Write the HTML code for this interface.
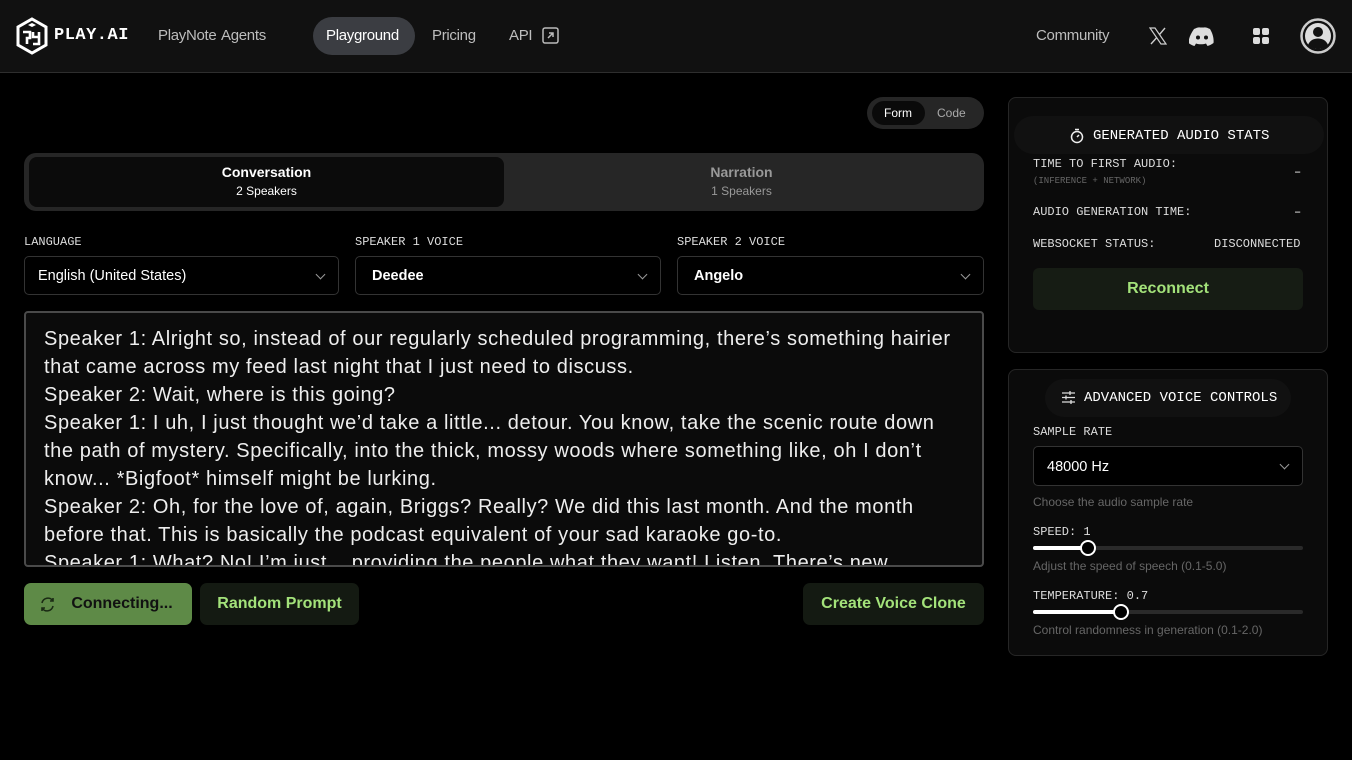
<!DOCTYPE html>
<html><head><meta charset="utf-8"><style>
*{box-sizing:border-box;margin:0;padding:0}
body{width:1352px;height:760px;background:#000;color:#fff;font-family:"Liberation Sans",sans-serif;overflow:hidden;position:relative}
.mono{font-family:"Liberation Mono",monospace}
.hdr{position:absolute;left:0;top:0;width:1352px;height:73px;background:#111;border-bottom:1px solid #2e2e2e}
.a{position:absolute}
.nav{font-size:15px;letter-spacing:-0.3px;color:#bdbdbd;top:27px}
.panel{position:absolute;left:1008px;width:320px;background:#0b0b0b;border:1px solid #262626;border-radius:8px}
.sel{position:absolute;height:39px;top:256px;border:1px solid #333;border-radius:5px;background:#000;font-size:14.5px;padding:11px 0 0 13px}
.chev{position:absolute;right:14px;top:14px;width:7px;height:7px;border-right:1.3px solid #999;border-bottom:1.3px solid #999;transform:rotate(45deg)}
.lbl{position:absolute;top:235px;font-size:12px;color:#ddd}
.btn{position:absolute;top:583px;height:42px;border-radius:7px;font-size:16px;font-weight:bold;color:#a3e27a;background:#141a12;padding-top:12px;text-align:center}
.st{position:absolute;left:24px;font-size:12px;color:#ddd}
</style></head><body>
<div class="hdr">
<svg class="a" style="left:15px;top:17px" width="34" height="38" viewBox="0 0 34 38"><path d="M17 2 L31 10 L31 28 L17 36 L3 28 L3 10 Z" fill="none" stroke="#fff" stroke-width="3"/><path d="M13 8l4-2 4 2-4 2z" fill="#fff"/><path d="M8 15h7v6h-3v6M18 15v5h6v-5M24 20v7h-6" fill="none" stroke="#fff" stroke-width="2.6"/></svg>
<div class="a mono" style="left:54px;top:26px;font-size:17px;font-weight:bold;letter-spacing:0.5px">PLAY.AI</div>
<div class="a nav" style="left:158px">PlayNote</div>
<div class="a nav" style="left:221px">Agents</div>
<div class="a" style="left:313px;top:17px;width:102px;height:38px;border-radius:19px;background:#3b3d42"></div>
<div class="a nav" style="left:326px;color:#fff">Playground</div>
<div class="a nav" style="left:432px">Pricing</div>
<div class="a nav" style="left:509px">API</div>
<svg class="a" style="left:542px;top:27px" width="17" height="17" viewBox="0 0 17 17"><rect x="1" y="1" width="15" height="15" rx="2" fill="none" stroke="#bbb" stroke-width="1.5"/><path d="M6 11l5-5M7 6h4v4" fill="none" stroke="#bbb" stroke-width="1.5"/></svg>
<div class="a nav" style="left:1036px">Community</div>
<svg class="a" style="left:1149px;top:27px" width="18" height="18" viewBox="0 0 18 18"><path d="M1 1h5l11 16h-5z" fill="none" stroke="#ccc" stroke-width="1.2"/><path d="M16 1L10.5 7.5M2 17l5.8-6.5" stroke="#ccc" stroke-width="1.4"/></svg>
<svg class="a" style="left:1189px;top:27px" width="26" height="19" viewBox="0 0 26 19"><path d="M5 2c3-1.5 5-2 6-1.5h4c1-.5 3 0 6 1.5 3 5 4 10 3.5 14-2 1.5-4 2.5-6 3l-1.5-2.5c-3 1-7 1-10 0L5.5 19c-2-.5-4-1.5-6-3C-.5 12 1.5 7 5 2z" fill="#ddd"/><circle cx="9" cy="10.5" r="2" fill="#111"/><circle cx="17" cy="10.5" r="2" fill="#111"/></svg>
<svg class="a" style="left:1253px;top:28px" width="16" height="16"><rect x="0" y="0" width="7" height="7" rx="2" fill="#ddd"/><rect x="9" y="0" width="7" height="7" rx="2" fill="#ddd"/><rect x="0" y="9" width="7" height="7" rx="2" fill="#ddd"/><rect x="9" y="9" width="7" height="7" rx="2" fill="#ddd"/></svg>
<svg class="a" style="left:1300px;top:18px" width="36" height="36" viewBox="0 0 36 36"><circle cx="18" cy="18" r="16.5" fill="none" stroke="#ccc" stroke-width="2.5"/><circle cx="18" cy="18" r="13" fill="#ddd"/><circle cx="18" cy="14" r="5" fill="#111"/><path d="M8 27c2-5 6-6.5 10-6.5s8 1.5 10 6.5c-3 3-6 4-10 4s-7-1-10-4z" fill="#111"/></svg>
</div>

<div class="a" style="left:867px;top:97px;width:117px;height:32px;border-radius:16px;background:#262626"></div>
<div class="a" style="left:872px;top:101px;width:53px;height:24px;border-radius:12px;background:#0a0a0a"></div>
<div class="a" style="left:884px;top:106px;font-size:12px">Form</div>
<div class="a" style="left:937px;top:106px;font-size:12px;color:#aaa">Code</div>

<div class="a" style="left:24px;top:153px;width:960px;height:58px;border-radius:12px;background:#262626"></div>
<div class="a" style="left:29px;top:157px;width:475px;height:50px;border-radius:8px;background:#0b0b0b"></div>
<div class="a" style="left:29px;top:164px;width:475px;text-align:center;font-size:14px;font-weight:bold">Conversation</div>
<div class="a" style="left:29px;top:184px;width:475px;text-align:center;font-size:12px">2 Speakers</div>
<div class="a" style="left:504px;top:164px;width:475px;text-align:center;font-size:14px;font-weight:bold;color:#999">Narration</div>
<div class="a" style="left:504px;top:184px;width:475px;text-align:center;font-size:12px;color:#999">1 Speakers</div>

<div class="lbl mono" style="left:24px">LANGUAGE</div>
<div class="lbl mono" style="left:355px">SPEAKER 1 VOICE</div>
<div class="lbl mono" style="left:677px">SPEAKER 2 VOICE</div>
<div class="sel" style="left:24px;width:315px">English (United States)<i class="chev"></i></div>
<div class="sel" style="left:355px;width:306px;font-weight:bold;padding-left:16px">Deedee<i class="chev"></i></div>
<div class="sel" style="left:677px;width:307px;font-weight:bold;padding-left:16px">Angelo<i class="chev"></i></div>

<div class="a" style="left:24px;top:311px;width:960px;height:256px;border:2px solid #4a4a4a;border-radius:4px;background:#0b0b0b;overflow:hidden;padding:12px 18px 0 18px;font-size:20px;letter-spacing:0.6px;line-height:28px;color:#eee">Speaker 1: Alright so, instead of our regularly scheduled programming, there’s something hairier that came across my feed last night that I just need to discuss.<br>Speaker 2: Wait, where is this going?<br>Speaker 1: I uh, I just thought we’d take a little... detour. You know, take the scenic route down the path of mystery. Specifically, into the thick, mossy woods where something like, oh I don’t know... *Bigfoot* himself might be lurking.<br>Speaker 2: Oh, for the love of, again, Briggs? Really? We did this last month. And the month before that. This is basically the podcast equivalent of your sad karaoke go-to.<br>Speaker 1: What? No! I’m just... providing the people what they want! Listen. There’s new</div>

<div class="btn" style="left:24px;width:168px;background:#5e8a47;color:#111;padding-left:28px">Connecting...</div>
<svg class="a" style="left:39px;top:596px" width="17" height="17" viewBox="0 0 17 17"><path d="M3 7a6 6 0 0 1 11-2M14 10a6 6 0 0 1-11 2M14 2v3h-3M3 15v-3h3" fill="none" stroke="#1a2a14" stroke-width="1.6"/></svg>
<div class="btn" style="left:200px;width:159px">Random Prompt</div>
<div class="btn" style="left:803px;width:181px">Create Voice Clone</div>

<div class="panel" style="top:97px;height:256px"></div>
<div class="a" style="left:1014px;top:116px;width:310px;height:38px;border-radius:19px;background:#111"></div>
<svg class="a" style="left:1070px;top:128px" width="14" height="16" viewBox="0 0 14 16"><circle cx="7" cy="9" r="5.5" fill="none" stroke="#eee" stroke-width="1.5"/><path d="M5 1.5h4M7 9l2-2" stroke="#eee" stroke-width="1.5"/></svg>
<div class="a mono" style="left:1093px;top:128px;font-size:14px">GENERATED AUDIO STATS</div>
<div class="a mono" style="left:1033px;top:157px;font-size:12px;color:#ddd">TIME TO FIRST AUDIO:</div>
<div class="a mono" style="left:1033px;top:176px;font-size:9px;color:#666">(INFERENCE + NETWORK)</div>
<div class="a mono" style="left:1294px;top:165px;font-size:12px">–</div>
<div class="a mono" style="left:1033px;top:205px;font-size:12px;color:#ddd">AUDIO GENERATION TIME:</div>
<div class="a mono" style="left:1294px;top:205px;font-size:12px">–</div>
<div class="a mono" style="left:1033px;top:237px;font-size:12px;color:#ddd">WEBSOCKET STATUS:</div>
<div class="a mono" style="left:1214px;top:237px;font-size:12px;color:#ddd">DISCONNECTED</div>
<div class="a" style="left:1033px;top:268px;width:270px;height:42px;border-radius:6px;background:#161c14;color:#a3e27a;font-size:16px;font-weight:bold;text-align:center;padding-top:12px">Reconnect</div>

<div class="panel" style="top:369px;height:287px"></div>
<div class="a" style="left:1045px;top:379px;width:246px;height:38px;border-radius:19px;background:#111"></div>
<svg class="a" style="left:1061px;top:390px" width="15" height="15" viewBox="0 0 15 15"><path d="M1 3h13M1 7.5h13M1 12h13M9 1v4M5 5.5v4M10 10v4" stroke="#ddd" stroke-width="1.3"/></svg>
<div class="a mono" style="left:1084px;top:390px;font-size:14px">ADVANCED VOICE CONTROLS</div>
<div class="st mono" style="left:1033px;top:425px">SAMPLE RATE</div>
<div class="sel" style="left:1033px;top:446px;width:270px;height:40px;padding-left:13px;padding-top:12px">48000 Hz<i class="chev"></i></div>
<div class="a" style="left:1033px;top:495px;font-size:12px;color:#666">Choose the audio sample rate</div>
<div class="st mono" style="left:1033px;top:525px">SPEED: 1</div>
<div class="a" style="left:1033px;top:546px;width:270px;height:4px;border-radius:2px;background:#2a2a2a"></div>
<div class="a" style="left:1033px;top:546px;width:55px;height:4px;border-radius:2px;background:#fff"></div>
<div class="a" style="left:1080px;top:540px;width:16px;height:16px;border-radius:50%;background:#000;border:2.5px solid #fff"></div>
<div class="a" style="left:1033px;top:559px;font-size:12px;color:#666">Adjust the speed of speech (0.1-5.0)</div>
<div class="st mono" style="left:1033px;top:589px">TEMPERATURE: 0.7</div>
<div class="a" style="left:1033px;top:610px;width:270px;height:4px;border-radius:2px;background:#2a2a2a"></div>
<div class="a" style="left:1033px;top:610px;width:88px;height:4px;border-radius:2px;background:#fff"></div>
<div class="a" style="left:1113px;top:604px;width:16px;height:16px;border-radius:50%;background:#000;border:2.5px solid #fff"></div>
<div class="a" style="left:1033px;top:623px;font-size:12px;color:#666">Control randomness in generation (0.1-2.0)</div>
</body></html>
